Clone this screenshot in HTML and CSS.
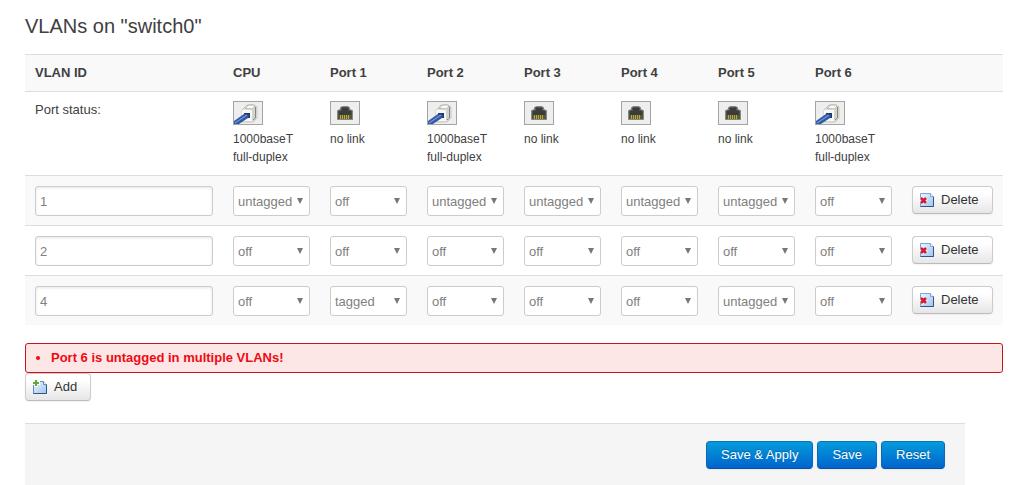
FILE: index.html
```
<!DOCTYPE html>
<html lang="en">
<head>
<meta charset="utf-8">
<title>VLANs on "switch0"</title>
<link rel="stylesheet" href="styles.css">
</head>
<body>
<svg class="sprite" aria-hidden="true">
  <defs>
    <linearGradient id="page" x1="0" y1="0" x2="1" y2="1"><stop offset="0" stop-color="#eef6ff"/><stop offset="1" stop-color="#9cc4f2"/></linearGradient>
    <symbol id="port-up" viewBox="0 0 30 24">
      <rect x=".5" y=".5" width="29" height="23" fill="#eee" stroke="#a4a4a4"/>
      <path d="M9 9l5-5h7l3 2v11l-4 4H9z" fill="#e6e6e1" stroke="#bdbdb6" stroke-width=".8"/>
      <path d="M12 7.500l3.500-3.500h5L22 5l-2.500 3z" fill="#fafaf7" stroke="#a3a39c" stroke-width=".8"/>
      <path d="M9 9h10v11H9z" fill="#f8f8f5"/>
      <path d="M19 9l3-3v11l-3 3z" fill="#d4d4cd"/>
      <path d="M22.500 6v11l-2.500 2" fill="none" stroke="#85857d"/>
      <path d="M11 12h6v5h-3l-3-2z" fill="#1f3a66"/>
      <path d="M1 20l10-7 5 1-1 3-9 6H1z" fill="#3158a3"/>
      <path d="M2 22l12-8" stroke="#6f92d6" stroke-width="1.500"/>
    </symbol>
    <symbol id="port-down" viewBox="0 0 30 24">
      <rect x=".5" y=".5" width="29" height="23" fill="#eee" stroke="#a4a4a4"/>
      <path d="M7.500 18.500v-9l3-1v-2l2-1h5l2 1v2l3 1v9z" fill="#50524f" stroke="#858780"/>
      <path d="M12 7h6v3h3v4H9v-4h3z" fill="#393c39"/>
      <path d="M9 14h12v4H9z" fill="#5d5a30"/>
      <path d="M10.500 14v4m2-4v4m2-4v4m2-4v4m2-4v4" stroke="#b9aa3c"/>
    </symbol>
    <symbol id="remove" viewBox="0 0 16 16">
      <path d="M1.500 1.500h10l3 3v10h-13z" fill="url(#page)" stroke="#7da5d8"/>
      <path d="M14.500 4.500v10h-13" fill="none" stroke="#35557f"/>
      <path d="M11.500 1.500v3h3" fill="#fff" stroke="#7da5d8"/>
      <path d="M2 6l5 5m0-5l-5 5" stroke="#fff" stroke-width="4.500"/>
      <path d="M2 6l5 5m0-5l-5 5" stroke="#cf1c34" stroke-width="2.800"/>
    </symbol>
    <symbol id="add" viewBox="0 0 16 16">
      <path d="M1.500 2.500h10l3 3v9h-13z" fill="url(#page)" stroke="#5a8cc6"/>
      <path d="M14.500 5.500v9h-13" fill="none" stroke="#35557f"/>
      <path d="M11.500 2.500v3h3" fill="#fff" stroke="#5a8cc6"/>
      <path d="M4 0v8M0 4h8" stroke="#fff" stroke-width="4"/>
      <path d="M4 1v6M1 4h6" stroke="#65a838" stroke-width="2.200"/>
    </symbol>
  </defs>
</svg>
<form class="page">
  <h1 class="title">VLANs on "switch0"</h1>
  <table class="vlans">
    <colgroup><col class="col-id"><col class="col-port" span="7"><col></colgroup>
    <thead>
      <tr class="shaded"><th>VLAN ID</th><th>CPU</th><th>Port 1</th><th>Port 2</th><th>Port 3</th><th>Port 4</th><th>Port 5</th><th>Port 6</th><th></th></tr>
    </thead>
    <tbody>
      <tr class="status">
        <td class="status-label">Port status:</td>
        <td><svg class="port"><use href="#port-up"/></svg>1000baseT<br>full-duplex</td>
        <td><svg class="port"><use href="#port-down"/></svg>no link</td>
        <td><svg class="port"><use href="#port-up"/></svg>1000baseT<br>full-duplex</td>
        <td><svg class="port"><use href="#port-down"/></svg>no link</td>
        <td><svg class="port"><use href="#port-down"/></svg>no link</td>
        <td><svg class="port"><use href="#port-down"/></svg>no link</td>
        <td><svg class="port"><use href="#port-up"/></svg>1000baseT<br>full-duplex</td>
        <td></td>
      </tr>
      <tr class="shaded">
        <td><input class="field" type="text" aria-label="VLAN ID" value="1"></td>
        <td><select class="field pick" aria-label="CPU"><option>off</option><option selected>untagged</option><option>tagged</option></select></td>
        <td><select class="field pick" aria-label="Port 1"><option selected>off</option><option>untagged</option><option>tagged</option></select></td>
        <td><select class="field pick" aria-label="Port 2"><option>off</option><option selected>untagged</option><option>tagged</option></select></td>
        <td><select class="field pick" aria-label="Port 3"><option>off</option><option selected>untagged</option><option>tagged</option></select></td>
        <td><select class="field pick" aria-label="Port 4"><option>off</option><option selected>untagged</option><option>tagged</option></select></td>
        <td><select class="field pick" aria-label="Port 5"><option>off</option><option selected>untagged</option><option>tagged</option></select></td>
        <td><select class="field pick" aria-label="Port 6"><option selected>off</option><option>untagged</option><option>tagged</option></select></td>
        <td><button class="btn" type="button"><svg class="glyph"><use href="#remove"/></svg>Delete</button></td>
      </tr>
      <tr>
        <td><input class="field" type="text" aria-label="VLAN ID" value="2"></td>
        <td><select class="field pick" aria-label="CPU"><option selected>off</option><option>untagged</option><option>tagged</option></select></td>
        <td><select class="field pick" aria-label="Port 1"><option selected>off</option><option>untagged</option><option>tagged</option></select></td>
        <td><select class="field pick" aria-label="Port 2"><option selected>off</option><option>untagged</option><option>tagged</option></select></td>
        <td><select class="field pick" aria-label="Port 3"><option selected>off</option><option>untagged</option><option>tagged</option></select></td>
        <td><select class="field pick" aria-label="Port 4"><option selected>off</option><option>untagged</option><option>tagged</option></select></td>
        <td><select class="field pick" aria-label="Port 5"><option selected>off</option><option>untagged</option><option>tagged</option></select></td>
        <td><select class="field pick" aria-label="Port 6"><option selected>off</option><option>untagged</option><option>tagged</option></select></td>
        <td><button class="btn" type="button"><svg class="glyph"><use href="#remove"/></svg>Delete</button></td>
      </tr>
      <tr class="shaded">
        <td><input class="field" type="text" aria-label="VLAN ID" value="4"></td>
        <td><select class="field pick" aria-label="CPU"><option selected>off</option><option>untagged</option><option>tagged</option></select></td>
        <td><select class="field pick" aria-label="Port 1"><option>off</option><option>untagged</option><option selected>tagged</option></select></td>
        <td><select class="field pick" aria-label="Port 2"><option selected>off</option><option>untagged</option><option>tagged</option></select></td>
        <td><select class="field pick" aria-label="Port 3"><option selected>off</option><option>untagged</option><option>tagged</option></select></td>
        <td><select class="field pick" aria-label="Port 4"><option selected>off</option><option>untagged</option><option>tagged</option></select></td>
        <td><select class="field pick" aria-label="Port 5"><option>off</option><option selected>untagged</option><option>tagged</option></select></td>
        <td><select class="field pick" aria-label="Port 6"><option selected>off</option><option>untagged</option><option>tagged</option></select></td>
        <td><button class="btn" type="button"><svg class="glyph"><use href="#remove"/></svg>Delete</button></td>
      </tr>
    </tbody>
  </table>
  <ul class="errors"><li>Port 6 is untagged in multiple VLANs!</li></ul>
  <button class="btn" type="button"><svg class="glyph"><use href="#add"/></svg>Add</button>
  <div class="actions">
    <button class="btn primary" type="button">Save &amp; Apply</button>
    <button class="btn primary" type="button">Save</button>
    <button class="btn primary" type="reset">Reset</button>
  </div>
</form>
</body>
</html>
```
FILE: styles.css
```
* { box-sizing: border-box; }
body {
  margin: 0;
  background: #fff;
  color: #404040;
  font: 13px/18px "Liberation Sans", Arial, sans-serif;
}
.sprite { position: absolute; width: 0; height: 0; }
.page { padding: 8px 24px 0 25px; }
.title { margin: 0 0 10px; font-size: 20px; font-weight: normal; line-height: 36px; }

.vlans { width: 100%; table-layout: fixed; border-collapse: separate; border-spacing: 0; }
.col-id { width: 198px; }
.col-port { width: 97px; }
.vlans th, .vlans td {
  border-top: 1px solid #ddd;
  padding: 10px 10px 9px;
  text-align: left;
  vertical-align: top;
}
.vlans th, .vlans .status td { padding-top: 9px; }
.vlans .shaded > * { background: #f9f9f9; }
.status { font-size: 12px; }
.status-label { font-size: 13px; }
.port { display: block; width: 30px; height: 24px; margin-bottom: 5px; }

.field {
  display: block;
  width: 100%;
  height: 30px;
  padding: 1px 4px 0;
  border: 1px solid #ccc;
  border-radius: 3px;
  background: #fff;
  color: #808080;
  font: inherit;
  box-shadow: inset 0 1px 3px rgba(0, 0, 0, .1);
}
.pick {
  appearance: none;
  box-shadow: none;
  background: #fff url("data:image/svg+xml,%3Csvg xmlns='http://www.w3.org/2000/svg' width='6' height='6'%3E%3Cpath d='M0 0h6L3 6z' fill='%23777'/%3E%3C/svg%3E") no-repeat right 6px top 11px;
}

.btn {
  display: flex;
  align-items: center;
  gap: 6px;
  height: 28px;
  padding: 0 13px 1px 6px;
  border: 1px solid #ccc;
  border-bottom-color: #bbb;
  border-radius: 4px;
  background: linear-gradient(#fff 25%, #e6e6e6);
  color: #333;
  font: inherit;
  white-space: nowrap;
  box-shadow: 0 1px 2px rgba(0, 0, 0, .05);
}
.glyph { width: 16px; height: 16px; }

.errors {
  margin: 18px 0 0;
  padding: 5px 8px 5px 25px;
  border: 1px solid #c8141e;
  border-radius: 3px;
  background: #fde6e6;
  color: #ee0a14;
  font-weight: bold;
}
.actions {
  display: flex;
  justify-content: flex-end;
  gap: 4px;
  margin: 22px 38px 0 0;
  padding: 17px 20px 16px;
  border-top: 1px solid #ddd;
  background: #f5f5f5;
}
.primary {
  padding: 0 14px 1px;
  border-color: #0c72bd #0c68b8 #0a4f9c;
  background: linear-gradient(#049cdb, #0064cd);
  color: #fff;
  text-shadow: 0 -1px 0 rgba(0, 0, 0, .25);
}
```
